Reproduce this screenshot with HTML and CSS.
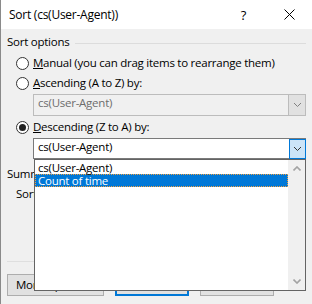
FILE: index.html
```html
<!DOCTYPE html>
<html>
<head>
<meta charset="utf-8">
<link rel="stylesheet" href="styles.css">
</head>
<body>
<div class="dialog">
  <div class="titlebar">
    <span class="title">Sort (cs(User-Agent))</span>
    <span class="tb-btn help">?</span>
    <span class="tb-btn close">
      <svg width="11" height="11" viewBox="0 0 11 11"><path d="M0.5 0.5 L10.5 10.5 M10.5 0.5 L0.5 10.5" stroke="#000" stroke-width="1" fill="none"/></svg>
    </span>
  </div>
  <div class="content">
    <div class="group-head"><span class="label">Sort options</span><div class="rule"></div></div>
    <div class="radio-row r1"><span class="radio"></span><span><u>M</u>anual (you can drag items to rearrange them)</span></div>
    <div class="radio-row r2"><span class="radio"></span><span><u>A</u>scending (A to Z) by:</span></div>
    <div class="combo disabled">
      <span class="combo-text">cs(User-Agent)</span>
      <span class="combo-btn"><svg width="7" height="4" viewBox="0 0 7 4"><polyline points="0,0 3.5,3.5 7,0" stroke="#808080" stroke-width="1" fill="none"/></svg></span>
    </div>
    <div class="radio-row r3"><span class="radio checked"></span><span><u>D</u>escending (Z to A) by:</span></div>
    <div class="combo-wrap">
      <div class="combo active">
        <span class="combo-text">cs(User-Agent)</span>
        <span class="combo-btn"><svg width="7" height="4" viewBox="0 0 7 4"><polyline points="0,0 3.5,3.5 7,0" stroke="#333" stroke-width="1" fill="none"/></svg></span>
      </div>
      <div class="dropdown">
        <div class="items">
          <div class="item">cs(User-Agent)</div>
          <div class="item sel">Count of time</div>
        </div>
        <div class="scrollbar">
          <div class="arrow"><svg width="8" height="5" viewBox="0 0 8 5"><polyline points="0.5,4.5 4,1 7.5,4.5" stroke="#a3a3a3" stroke-width="1.6" fill="none"/></svg></div>
          <div class="track"></div>
          <div class="arrow"><svg width="8" height="5" viewBox="0 0 8 5"><polyline points="0.5,0.5 4,4 7.5,0.5" stroke="#a3a3a3" stroke-width="1.6" fill="none"/></svg></div>
        </div>
      </div>
    </div>
    <div class="group-head summary"><span class="label">Summary</span><div class="rule"></div></div>
    <div class="summary-text">Sort cs(User-Agent) by Count of time in descending order</div>
    <div class="separator"></div>
    <div class="buttons">
      <button class="btn more">More Options...</button>
      <button class="btn ok">OK</button>
      <button class="btn cancel">Cancel</button>
    </div>
  </div>
</div>
</body>
</html>
```

FILE: styles.css
```css
* { box-sizing: border-box; }
html, body { margin: 0; padding: 0; }
body {
  width: 312px;
  height: 304px;
  overflow: hidden;
  background: #f0f0f0;
  font-family: "Open Sans", "Noto Sans", sans-serif;
  font-size: 11.5px;
  letter-spacing: -0.25px;
  color: #000;
}
.dialog {
  height: 304px;
  border-left: 1px solid #8a8a8a;
  background: #f0f0f0;
}
.titlebar {
  height: 29px;
  background: #fff;
  display: flex;
  align-items: center;
  padding-left: 8px;
}
.title { flex: 1; line-height: 16px; font-size: 12px; }
.tb-btn {
  width: 45px;
  height: 29px;
  display: flex;
  align-items: center;
  justify-content: center;
}
.help { font-size: 13px; line-height: 16px; }
.close { width: 46px; }
.content { padding: 5px 6px 0 6px; }
.group-head { display: flex; height: 16px; line-height: 16px; }
.group-head .rule {
  flex: 1;
  height: 1px;
  background: #dcdcdc;
  margin: 9px 0 0 6px;
}
.radio-row {
  display: flex;
  align-items: center;
  height: 20px;
  line-height: 16px;
  padding-left: 9px;
}
.r1 { margin-top: 3px; }
.r3 { height: 22px; }
.radio {
  width: 13px;
  height: 13px;
  border: 1px solid #333;
  border-radius: 50%;
  background: #fff;
  margin-right: 4px;
  display: flex;
  align-items: center;
  justify-content: center;
  flex: none;
}
.radio.checked::after {
  content: "";
  width: 7px;
  height: 7px;
  border-radius: 50%;
  background: #222;
}
.combo {
  display: flex;
  margin-left: 26px;
  border: 1px solid #7a7a7a;
  background: #fff;
  line-height: 16px;
}
.combo-text { flex: 1; padding-left: 4px; white-space: nowrap; }
.combo-btn {
  width: 17px;
  display: flex;
  align-items: center;
  justify-content: center;
  flex: none;
}
.combo.disabled {
  height: 22px;
  margin-top: 1px;
  background: #f0f0f0;
  border-color: #bcbcbc;
  color: #6d6d6d;
}
.combo.disabled .combo-btn {
  background: #e1e1e1;
  border-left: 1px solid #bcbcbc;
  margin-right: 0;
}
.combo-wrap { position: relative; }
.combo.active { height: 21px; }
.combo.active .combo-btn {
  border: 1px solid #0078d7;
  background: #cce4f7;
  margin: 0 -1px -1px 0;
}
.dropdown {
  position: absolute;
  z-index: 2;
  top: 100%;
  left: 27px;
  right: 0;
  height: 132px;
  border: 1px solid #646464;
  background: #fff;
  display: flex;
}
.items { flex: 1; padding-top: 1px; }
.item {
  height: 13px;
  line-height: 13px;
  padding-left: 3px;
  white-space: nowrap;
}
.item.sel {
  background: #0078d7;
  color: #fff;
  border: 1px dotted #f0a040;
  padding-left: 2px;
  line-height: 11px;
}
.scrollbar {
  width: 17px;
  background: #f0f0f0;
  display: flex;
  flex-direction: column;
}
.arrow {
  height: 17px;
  display: flex;
  align-items: center;
  justify-content: center;
}
.track { flex: 1; }
.summary { margin-top: 7px; }
.summary-text {
  margin-top: 4px;
  padding-left: 9px;
  line-height: 16px;
  height: 16px;
  white-space: nowrap;
  overflow: hidden;
}
.separator {
  margin-top: 59px;
  height: 1px;
  background: #dfdfdf;
}
.buttons {
  margin-top: 12px;
  display: flex;
  gap: 11px;
}
.btn {
  height: 22px;
  width: 74px;
  border: 1px solid #adadad;
  background: #e1e1e1;
  font-family: inherit;
  font-size: inherit;
  letter-spacing: inherit;
  color: #000;
  line-height: 16px;
  padding: 0;
}
.btn.more { width: 97px; }
.btn.ok { border: 2px solid #0078d7; }
```
